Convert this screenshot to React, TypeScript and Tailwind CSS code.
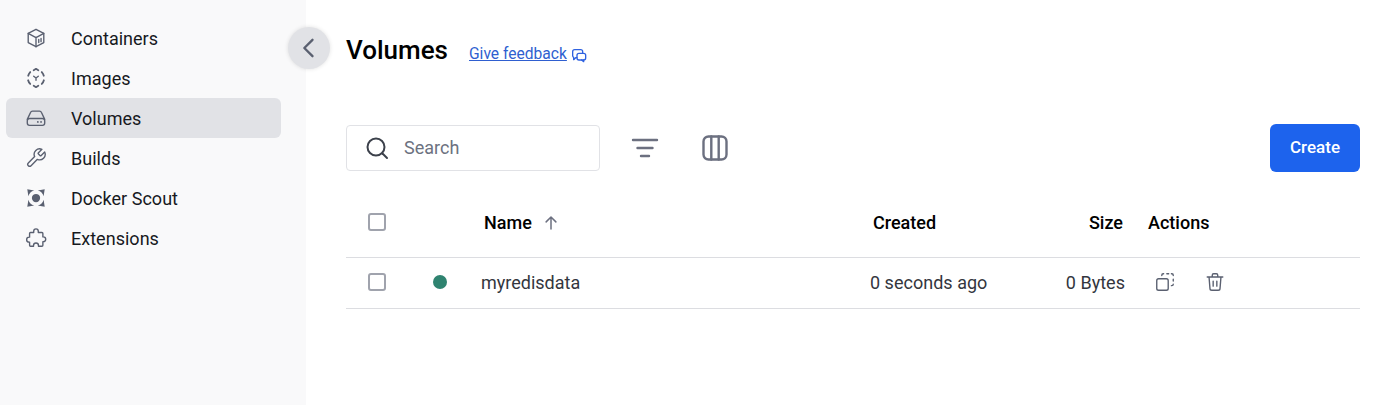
import React from "react";

const Sv = ({ size = 22, sw = 1.5, color = "#5a6070", children, className = "" }: any) => (
  <svg width={size} height={size} viewBox="0 0 24 24" fill="none" stroke={color} strokeWidth={sw} strokeLinecap="round" strokeLinejoin="round" className={className}>
    {children}
  </svg>
);

const ContainersIcon = () => (
  <Sv>
    <path d="M12 2.500 20.500 7v10L12 21.500 3.500 17V7z" />
    <path d="M3.500 7 12 11.500 20.500 7M12 11.500v10" />
    <path d="M15 13.500v3.500M17.500 12.500v3.500" />
  </Sv>
);
const ImagesIcon = () => (
  <Sv>
    <path d="M3.500 9.500a9 9 0 0 1 2.200-4M18.300 5.500a9 9 0 0 1 2.200 4M20.600 14.500a9 9 0 0 1-2.300 4M5.700 18.500a9 9 0 0 1-2.300-4" strokeWidth={2} />
    <path d="M9.500 3.500 12 2l2.500 1.500M9.500 20.500 12 22l2.500-1.500" strokeWidth={2} />
    <path d="M9.500 10 12 12l2.500-2M12 12v2.500" />
  </Sv>
);
const VolumesIcon = () => (
  <Sv>
    <path d="M2.500 13.500 6 6a2.500 2.500 0 0 1 2.200-1.500h7.600A2.500 2.500 0 0 1 18 6l3.500 7.500" />
    <rect x="2.500" y="12.500" width="19" height="7.500" rx="2.500" />
    <path d="M14 16.300h.01M17.500 16.300h.01" strokeWidth={2} />
  </Sv>
);
const BuildsIcon = () => (
  <Sv>
    <path d="M14.700 6.300a1 1 0 0 0 0 1.400l1.600 1.600a1 1 0 0 0 1.400 0l3.770-3.770a6 6 0 0 1-7.940 7.940l-6.910 6.910a2.120 2.120 0 0 1-3-3l6.910-6.910a6 6 0 0 1 7.940-7.940l-3.760 3.760z" />
  </Sv>
);
const ScoutIcon = () => (
  <svg width="22" height="22" viewBox="0 0 24 24" fill="#5a6070">
    <circle cx="12" cy="12" r="4.500" />
    <path d="M2.500 2.500l7.500 1.200a8.700 8.700 0 0 0-6.300 6.300zM21.500 2.500l-1.200 7.500a8.700 8.700 0 0 0-6.300-6.300zM2.500 21.500l1.200-7.500a8.700 8.700 0 0 0 6.300 6.300zM21.500 21.500l-7.500-1.200a8.700 8.700 0 0 0 6.300-6.300z" />
  </svg>
);
const ExtensionsIcon = () => (
  <Sv>
    <path d="M9.500 4.500a2.500 2.500 0 0 1 5 0V6h4a1 1 0 0 1 1 1v3.800h.5a2.600 2.600 0 0 1 0 5.200h-.5v4a1 1 0 0 1-1 1h-3.800v-.8a2.700 2.700 0 0 0-5.400 0v.8H6a1 1 0 0 1-1-1v-3.500H4.500a2.700 2.700 0 0 1 0-5.400H5V7a1 1 0 0 1 1-1h3.500z" />
  </Sv>
);

const nav = [
  ["Containers", <ContainersIcon />],
  ["Images", <ImagesIcon />],
  ["Volumes", <VolumesIcon />],
  ["Builds", <BuildsIcon />],
  ["Docker Scout", <ScoutIcon />],
  ["Extensions", <ExtensionsIcon />],
] as const;

const Check = () => <span className="block w-[18px] h-[18px] rounded-[3px] border-2 border-[#a0a3ad] bg-white" />;

export default function App() {
  return (
    <div className="relative flex h-[405px] w-[1387px] overflow-hidden bg-white text-[#17191e] [font-family:Roboto,sans-serif]">
      <aside className="w-[306px] shrink-0 bg-[#f9f9fa] pt-[18px] pl-[6px] pr-[25px]">
        {nav.map(([label, icon]) => (
          <div key={label as string} className={`flex h-10 items-center rounded-md pl-[19px] ${label === "Volumes" ? "bg-[#e1e2e6]" : ""}`}>
            <span className="flex w-[22px] justify-center">{icon}</span>
            <span className="ml-6 mt-[2px] text-[18px]/[24px] tracking-[0.02px]">{label}</span>
          </div>
        ))}
      </aside>

      <button className="absolute left-[288px] top-[27px] flex h-[42px] w-[42px] items-center justify-center rounded-full bg-[#e1e2e6] shadow-[0_0_4px_rgba(0,0,0,0.12)]">
        <Sv size={28} sw={2}><path d="M15 5l-7 7 7 7" /></Sv>
      </button>

      <main className="flex-1 pl-10 pr-[27px] pt-[32px]">
        <div className="flex h-9 items-center">
          <h1 className="text-[26px]/[36px] font-medium text-black">Volumes</h1>
          <a className="ml-[21px] mt-[7px] flex items-center text-[15.6px]/[20px] text-[#2f5fd0]">
            <span className="underline">Give feedback</span>
            <svg className="ml-[4px] mt-[2px]" width="16" height="16" viewBox="0 0 24 24" fill="none" stroke="#2f62e0" strokeWidth="2" strokeLinecap="round" strokeLinejoin="round">
              <path d="M9 16H7l-3 3v-3.500A3 3 0 0 1 2.500 13V7a3 3 0 0 1 3-3h9a3 3 0 0 1 3 3v2" />
              <rect x="9" y="9.500" width="13" height="10" rx="3" />
              <path d="M19 19.500V22l-3-2.500" />
            </svg>
          </a>
        </div>

        <div className="mt-[56px] flex h-12 items-center">
          <div className="flex h-[46px] w-[254px] items-center rounded-[4px] border border-[#e1e2e6] bg-white pl-[18px]">
            <Sv size={24} sw={2} color="#3c414b"><circle cx="11" cy="11" r="8.500" /><path d="M17.500 17.500 22 22" /></Sv>
            <span className="ml-[15px] mb-[2px] text-[18px] text-[#6c7280]">Search</span>
          </div>
          <button className="ml-[30px] flex">
            <svg width="30" height="30" viewBox="0 0 30 30" fill="none" stroke="#6c7080" strokeWidth="2.400" strokeLinecap="round">
              <path d="M3 7h24M7.500 15h15M11 23h8" />
            </svg>
          </button>
          <button className="ml-[42px] flex">
            <svg width="26" height="26" viewBox="0 0 26 26" fill="none" stroke="#6c7080" strokeWidth="2.400" strokeLinecap="round" strokeLinejoin="round">
              <rect x="1.500" y="1.500" width="23" height="23" rx="5" />
              <path d="M9.300 1.500v23M16.700 1.500v23" />
            </svg>
          </button>
          <button className="ml-auto h-12 w-[90px] rounded-md bg-[#1d63ed] text-[17px] font-medium text-white">Create</button>
        </div>

        <div className="mt-[10px] text-[18px]">
          <div className="flex h-[76px] items-start border-b border-[#dcdde1] pt-[27px] font-medium">
            <span className="ml-[22px] mt-[4px] w-[116px]"><Check /></span>
            <span className="flex w-[389px] items-center text-black">Name
              <svg className="ml-[10px]" width="18" height="18" viewBox="0 0 24 24" fill="none" stroke="#6c7080" strokeWidth="2" strokeLinecap="round" strokeLinejoin="round"><path d="M12 20V4M5.500 10.500 12 4l6.500 6.500" /></svg>
            </span>
            <span className="w-[150px] text-black">Created</span>
            <span className="w-[100px] text-right text-black">Size</span>
            <span className="ml-[25px] text-black">Actions</span>
          </div>
          <div className="flex h-[51px] items-center border-b border-[#dcdde1] text-[#33363e]">
            <span className="ml-[22px] mb-[2px] w-[65px]"><Check /></span>
            <span className="mb-[2px] h-[14px] w-[14px] rounded-full bg-[#2f8370]" />
            <span className="ml-[34px] mb-[2px] w-[389px]">myredisdata</span>
            <span className="mb-[2px] w-[150px] tracking-[0.02px]">0 seconds ago</span>
            <span className="mb-[2px] w-[105px] text-right tracking-[0.02px]">0 Bytes</span>
            <span className="ml-[29px] mb-[2px] flex items-center gap-[28px]">
              <Sv size={22}>
                <rect x="3" y="8.500" width="12.500" height="12.500" rx="2" />
                <path d="M8.500 5V4.500A1.500 1.500 0 0 1 10 3h.5M14 3h2M19 3h.5A1.500 1.500 0 0 1 21 4.500V5M21 9v2M21 14.500a1.500 1.500 0 0 1-1.500 1.500H19" />
              </Sv>
              <Sv size={22}>
                <path d="M3.500 6.500h17M9 6.500V4.500A1.500 1.500 0 0 1 10.500 3h3A1.500 1.500 0 0 1 15 4.500v2M5.500 6.500 6.500 19a2 2 0 0 0 2 2h7a2 2 0 0 0 2-2l1-12.500" />
                <path d="M10 11v5.500M14 11v5.500" />
              </Sv>
            </span>
          </div>
        </div>
      </main>
    </div>
  );
}
